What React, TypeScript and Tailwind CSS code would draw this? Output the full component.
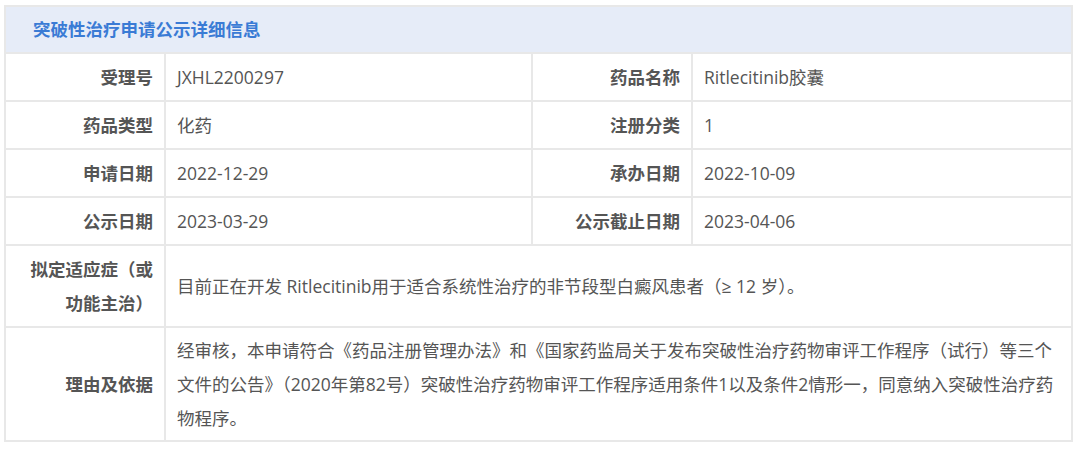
import React from "react";

const font = "font-['Open_Sans','Noto_Sans_CJK_SC',sans-serif]";

function Label({ children }: { children: React.ReactNode }) {
  return (
    <div className="bg-white flex items-center justify-end pr-[11px] pl-[6px] text-right font-bold text-[#555] leading-[34px]">
      {children}
    </div>
  );
}

function Value({ children, className = "" }: { children: React.ReactNode; className?: string }) {
  return (
    <div className={`bg-white flex items-center pl-[11px] pr-[8px] min-w-0 overflow-hidden text-[#555] ${className}`}>
      {children}
    </div>
  );
}

export default function App() {
  return (
    <div className={`w-[1080px] h-[461px] bg-white pt-[5px] pl-[4px] ${font} text-[17.5px]`}>
      <div className="w-[1069px] bg-[#e8e8e8] p-[2px] flex flex-col gap-[2px]">
        <div className="h-[45px] bg-[#e6ecf8] flex items-center pl-[27px] font-bold text-[17.5px] text-[#3a7bd5]">
          突破性治疗申请公示详细信息
        </div>
        <div className="grid grid-cols-[158px_365px_158px_minmax(0,1fr)] gap-[2px] auto-rows-[46px]">
          <Label>受理号</Label>
          <Value>JXHL2200297</Value>
          <Label>药品名称</Label>
          <Value>Ritlecitinib胶囊</Value>

          <Label>药品类型</Label>
          <Value>化药</Value>
          <Label>注册分类</Label>
          <Value>1</Value>

          <Label>申请日期</Label>
          <Value>2022-12-29</Value>
          <Label>承办日期</Label>
          <Value>2022-10-09</Value>

          <Label>公示日期</Label>
          <Value>2023-03-29</Value>
          <Label>公示截止日期</Label>
          <Value>2023-04-06</Value>
        </div>
        <div className="grid grid-cols-[158px_minmax(0,1fr)] grid-rows-[80px_112px] gap-[2px]">
          <Label>
            <span className="flex flex-col">
              <span>拟定适应症（或</span>
              <span>功能主治）</span>
            </span>
          </Label>
          <Value>目前正在开发 Ritlecitinib用于适合系统性治疗的非节段型白癜风患者（≥ 12 岁）。</Value>
          <Label>理由及依据</Label>
          <Value className="leading-[34px]">
            <div className="whitespace-nowrap">
              经审核，本申请符合《药品注册管理办法》和《国家药监局关于发布突破性治疗药物审评工作程序（试行）等三个
              <br />
              文件的公告》（2020年第82号）突破性治疗药物审评工作程序适用条件1以及条件2情形一，同意纳入突破性治疗药
              <br />
              物程序。
            </div>
          </Value>
        </div>
      </div>
    </div>
  );
}
